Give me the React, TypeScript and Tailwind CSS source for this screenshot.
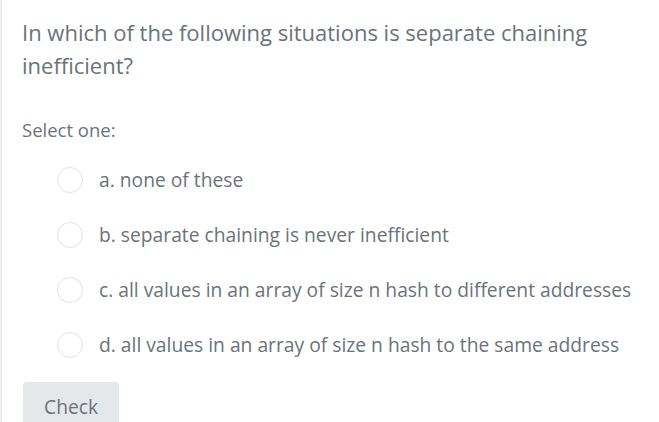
import React from 'react';

const options = [
  'a. none of these',
  'b. separate chaining is never inefficient',
  'c. all values in an array of size n hash to different addresses',
  'd. all values in an array of size n hash to the same address',
];

const App: React.FC = () => {
  return (
    <div
      className="h-[422px] w-[659px] overflow-hidden bg-white border-l-2 border-[#eeeeee] text-[#6a737b]"
      style={{ fontFamily: '"Open Sans", sans-serif' }}
    >
      <div className="pl-[20px] pt-[16px] pr-4">
        <h2 className="text-[22px] leading-[33px] font-normal">
          In which of the following situations is separate chaining inefficient?
        </h2>
        <p className="mt-[36px] text-[18.5px] leading-[24px]">Select one:</p>

        <div className="mt-[25px] flex flex-col gap-[29px] pl-[35px]">
          {options.map((opt) => (
            <label key={opt} className="flex items-center gap-[16px] text-[19.25px] leading-[26px]">
              <span className="h-[26px] w-[26px] shrink-0 rounded-full border border-[#dee2e6] bg-white" />
              <span>{opt}</span>
            </label>
          ))}
        </div>

        <button className="mt-[24px] ml-[1px] rounded-[4px] bg-[#e4e8eb] px-[21px] py-[12px] text-[19.25px] leading-[26px] text-[#6a737b]">
          Check
        </button>
      </div>
    </div>
  );
};

export default App;
